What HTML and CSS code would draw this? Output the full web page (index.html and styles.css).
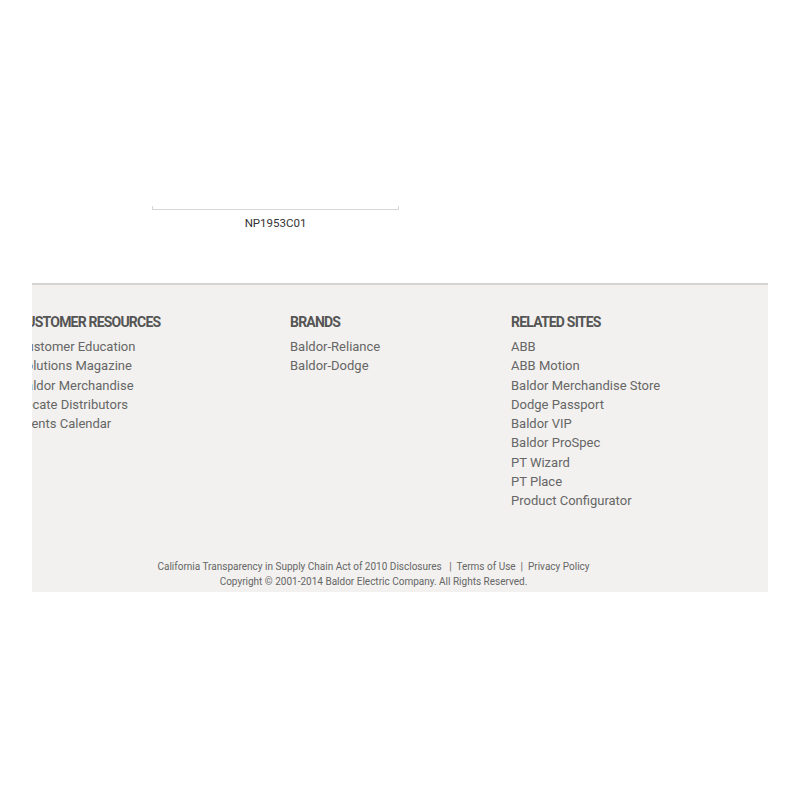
FILE: index.html
```html
<!DOCTYPE html>
<html>
<head>
<meta charset="utf-8">
<link rel="stylesheet" href="styles.css">
</head>
<body>
<div class="page">
  <div class="product">
    <div class="frame"></div>
    <div class="code">NP1953C01</div>
  </div>
  <footer class="footer">
    <div class="cols">
      <div class="col col1">
        <h3>CUSTOMER RESOURCES</h3>
        <a>Customer Education</a>
        <a>Solutions Magazine</a>
        <a>Baldor Merchandise</a>
        <a>Locate Distributors</a>
        <a>Events Calendar</a>
      </div>
      <div class="col col2">
        <h3>BRANDS</h3>
        <a>Baldor-Reliance</a>
        <a>Baldor-Dodge</a>
      </div>
      <div class="col col3">
        <h3>RELATED SITES</h3>
        <a>ABB</a>
        <a>ABB Motion</a>
        <a>Baldor Merchandise Store</a>
        <a>Dodge Passport</a>
        <a>Baldor VIP</a>
        <a>Baldor ProSpec</a>
        <a>PT Wizard</a>
        <a>PT Place</a>
        <a>Product Configurator</a>
      </div>
    </div>
    <div class="legal">
      <div>California Transparency in Supply Chain Act of 2010 Disclosures &nbsp;&nbsp;|&nbsp; Terms of Use &nbsp;|&nbsp; Privacy Policy</div>
      <div>Copyright © 2001-2014 Baldor Electric Company. All Rights Reserved.</div>
    </div>
  </footer>
</div>
</body>
</html>
```
FILE: styles.css
```css
html, body {
  margin: 0;
  padding: 0;
  background: #fff;
  font-family: Roboto, "Liberation Sans", Arial, sans-serif;
}
.page {
  width: 800px;
}
.product {
  padding-top: 206px;
  padding-left: 152px;
  width: 247px;
}
.frame {
  height: 3px;
  border: 1px solid #d6d6d6;
  border-top: none;
}
.code {
  text-align: center;
  font-size: 11.5px;
  color: #333;
  margin-top: 6px;
  line-height: 14px;
}
.footer {
  margin: 53px 32px 0 32px;
  background: #f2f1ef;
  border-top: 2px solid #d4d4d4;
  overflow: hidden;
  height: 307px;
}
.cols {
  display: flex;
  margin-left: -14px;
  padding-top: 28px;
}
.col {
  display: flex;
  flex-direction: column;
}
.col1 { width: 272px; }
.col2 { width: 221px; }
.col3 { width: 250px; }
.col h3 {
  margin: 0 0 6px 0;
  font-size: 14px;
  font-weight: 700;
  color: #555;
  line-height: 18px;
  letter-spacing: -0.8px;
}
.col a {
  font-size: 13px;
  color: #666;
  line-height: 19.3px;
}
.legal {
  margin-top: 48px;
  padding-right: 53px;
  text-align: center;
  font-size: 10px;
  color: #666;
  line-height: 15px;
}
```
